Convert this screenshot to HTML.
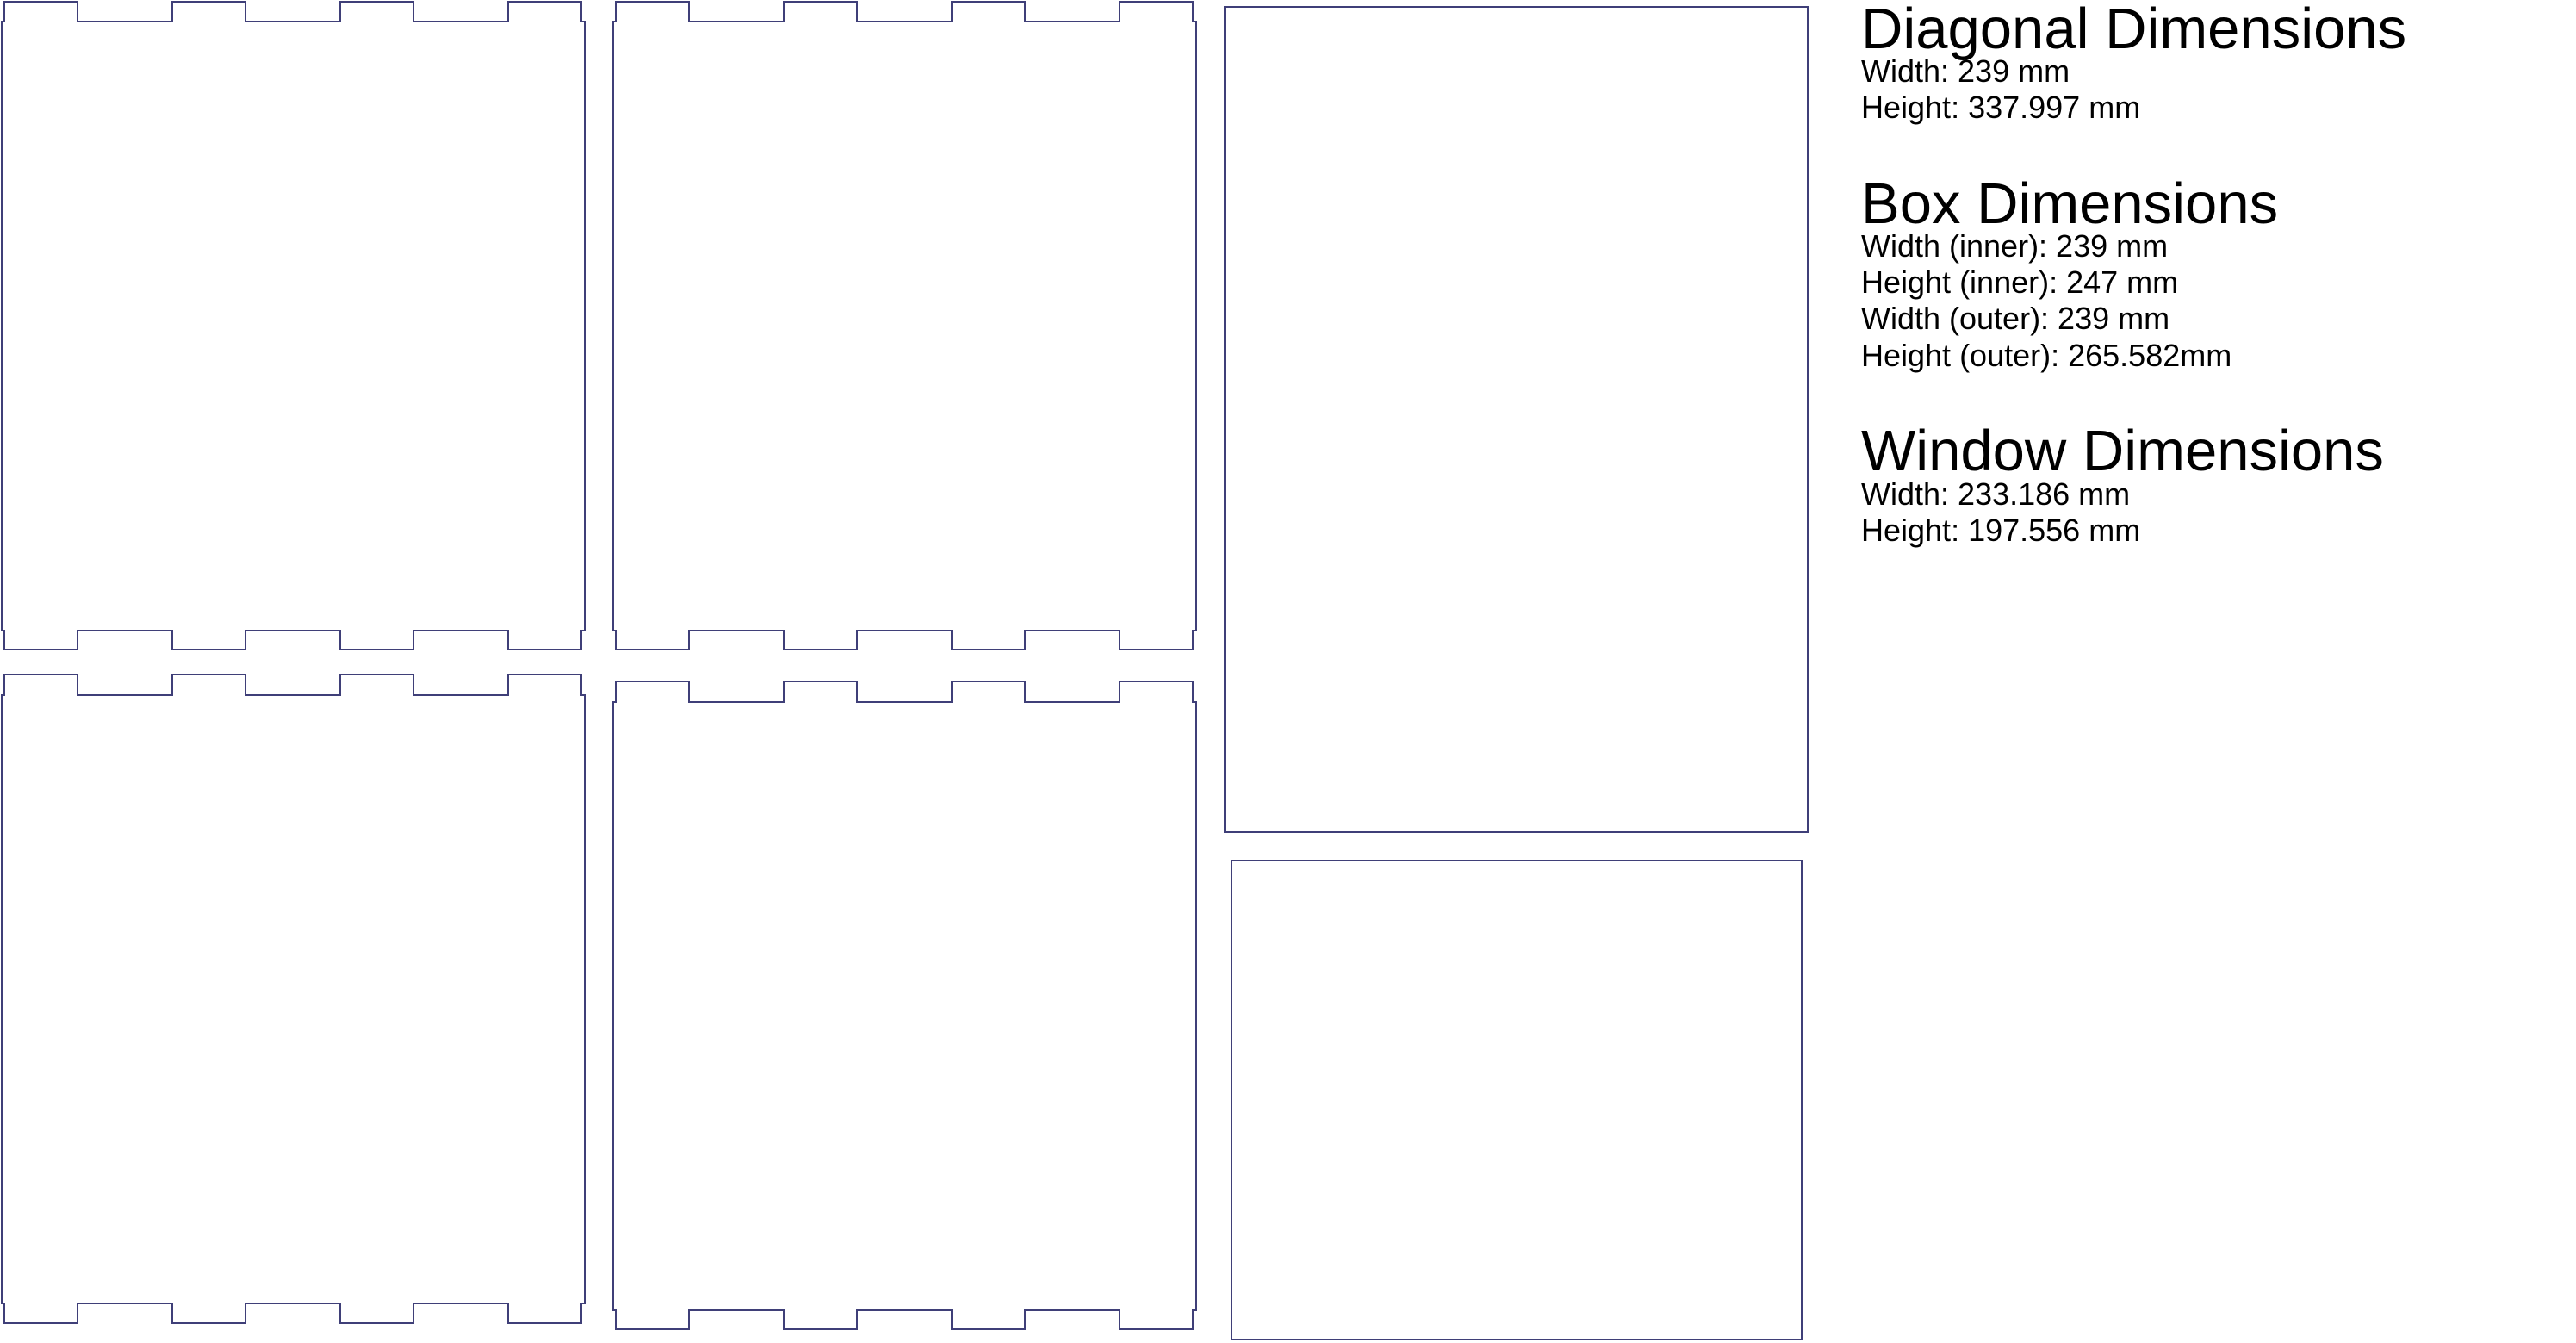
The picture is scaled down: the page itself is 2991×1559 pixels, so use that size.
<!DOCTYPE html>
<html><head><meta charset="utf-8"><style>
html,body{margin:0;padding:0;background:#fff;}
body{width:2991px;height:1559px;position:relative;overflow:hidden;font-family:"Liberation Sans",sans-serif;color:#000;}
svg{position:absolute;left:0;top:0;}
.h{position:absolute;left:2161px;font-size:67px;line-height:67px;white-space:nowrap;}
.t{position:absolute;left:2161px;font-size:36px;line-height:36px;white-space:nowrap;}
</style></head><body>
<svg width="2991" height="1559" viewBox="0 0 2991 1559" fill="none" stroke="#3f3f78" stroke-width="2">
<path d="M5,2 H90 V25 H200 V2 H285 V25 H395 V2 H480 V25 H590 V2 H675 V25 H679 V732 H675 V754 H590 V732 H480 V754 H395 V732 H285 V754 H200 V732 H90 V754 H5 V732 H2 V25 H5 Z"/>
<g transform="translate(710,0)">
<path d="M5,2 H90 V25 H200 V2 H285 V25 H395 V2 H480 V25 H590 V2 H675 V25 H679 V732 H675 V754 H590 V732 H480 V754 H395 V732 H285 V754 H200 V732 H90 V754 H5 V732 H2 V25 H5 Z"/>
</g>
<path d="M5,783 H90 V807 H200 V783 H285 V807 H395 V783 H480 V807 H590 V783 H675 V807 H679 V1513 H675 V1536 H590 V1513 H480 V1536 H395 V1513 H285 V1536 H200 V1513 H90 V1536 H5 V1513 H2 V807 H5 Z"/>
<g transform="translate(710,8)">
<path d="M5,783 H90 V807 H200 V783 H285 V807 H395 V783 H480 V807 H590 V783 H675 V807 H679 V1513 H675 V1535 H590 V1513 H480 V1535 H395 V1513 H285 V1535 H200 V1513 H90 V1535 H5 V1513 H2 V807 H5 Z"/>
</g>
<rect x="1422" y="8" width="677" height="958"/>
<rect x="1430" y="999" width="662" height="556"/>
</svg>
<div class="h" style="top:0px">Diagonal Dimensions</div>
<div class="t" style="top:65px">Width: 239 mm</div>
<div class="t" style="top:107px">Height: 337.997 mm</div>
<div class="h" style="top:203px">Box Dimensions</div>
<div class="t" style="top:268px">Width (inner): 239 mm</div>
<div class="t" style="top:310px">Height (inner): 247 mm</div>
<div class="t" style="top:352px">Width (outer): 239 mm</div>
<div class="t" style="top:395px">Height (outer): 265.582mm</div>
<div class="h" style="top:490px">Window Dimensions</div>
<div class="t" style="top:556px">Width: 233.186 mm</div>
<div class="t" style="top:598px">Height: 197.556 mm</div>
</body></html>
